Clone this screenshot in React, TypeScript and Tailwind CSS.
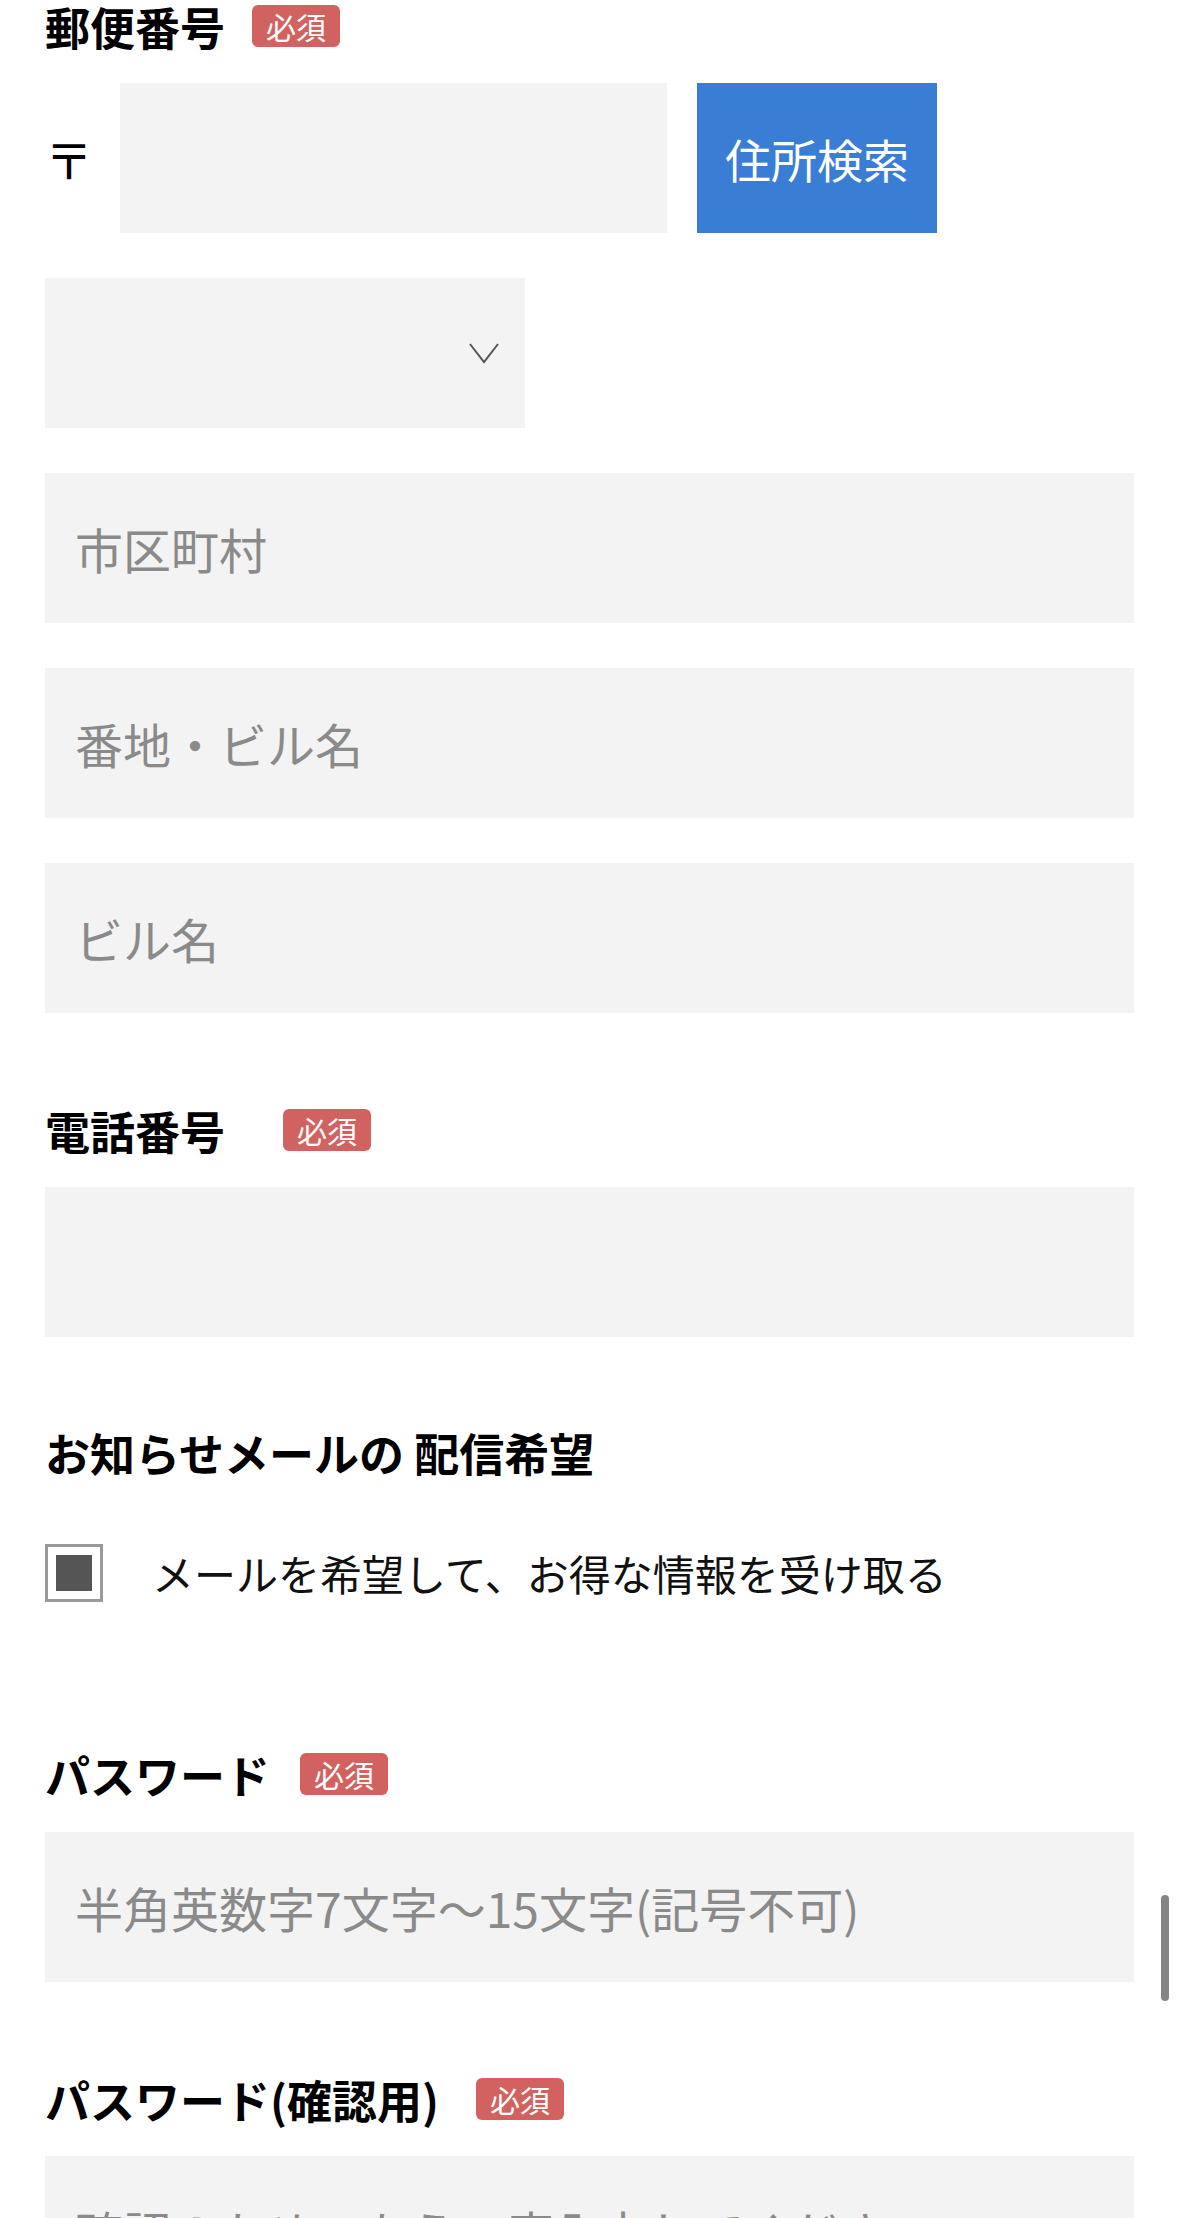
import React from "react";

function FieldLabel({ text, gap, required = true }: { text: string; gap?: string; required?: boolean }) {
  return (
    <div className="flex h-[52px] items-center">
      <span className="text-[45px] font-bold leading-none text-black">{text}</span>
      {required && (
        <span
          className={`${gap ?? "ml-[27px]"} flex h-[42px] w-[88px] items-center justify-center rounded-[6px] bg-[#d2625f] text-[30px] leading-none text-white`}
        >
          必須
        </span>
      )}
    </div>
  );
}

function TextField({ placeholder, className = "" }: { placeholder?: string; className?: string }) {
  return (
    <input
      type="text"
      placeholder={placeholder}
      className={`block h-[150px] w-full bg-[#f3f3f3] pl-[30px] text-[48px] leading-none text-[#222] outline-none placeholder:text-[#8a8a8a] ${className}`}
    />
  );
}

export default function App() {
  return (
    <div className="relative h-[2218px] overflow-hidden bg-white px-[45px] font-['Noto_Sans_CJK_JP',sans-serif] text-black">
      {/* 郵便番号 */}
      <FieldLabel text="郵便番号" gap="ml-[27px]" />
      <div className="mt-[31px] flex h-[150px] items-center">
        <span className="w-[75px] text-[48px] leading-none text-black">〒</span>
        <input type="text" className="h-full w-[547px] bg-[#f3f3f3] px-[30px] text-[48px] outline-none" />
        <button className="ml-[30px] h-full w-[240px] bg-[#3a7dd4] text-[46px] leading-none text-white">
          住所検索
        </button>
      </div>

      {/* 都道府県 */}
      <div className="mt-[45px] flex h-[150px] w-[480px] items-center justify-end bg-[#f3f3f3] pr-[26px]">
        <svg width="30" height="21" viewBox="0 0 30 21" fill="none">
          <polyline points="1,1 15,19 29,1" stroke="#555" strokeWidth="2" />
        </svg>
      </div>

      <div className="mt-[45px]">
        <TextField placeholder="市区町村" />
      </div>
      <div className="mt-[45px]">
        <TextField placeholder="番地・ビル名" />
      </div>
      <div className="mt-[45px]">
        <TextField placeholder="ビル名" />
      </div>

      {/* 電話番号 */}
      <div className="mt-[91px]">
        <FieldLabel text="電話番号" gap="ml-[58px]" />
      </div>
      <div className="mt-[31px]">
        <TextField />
      </div>

      {/* お知らせメール */}
      <div className="mt-[89px]">
        <FieldLabel text="お知らせメールの 配信希望" required={false} />
      </div>
      <label className="mt-[65px] flex h-[59px] items-center">
        <span className="flex h-[58px] w-[58px] items-center justify-center border-[3px] border-[#9a9a9a] bg-white">
          <span className="h-[36px] w-[36px] bg-[#555]" />
        </span>
        <span className="ml-[49px] text-[42px] leading-none text-[#111]">
          メールを希望して、お得な情報を受け取る
        </span>
      </label>

      {/* パスワード */}
      <div className="mt-[146px]">
        <FieldLabel text="パスワード" gap="ml-[30px]" />
      </div>
      <div className="mt-[32px]">
        <TextField placeholder="半角英数字7文字〜15文字(記号不可)" />
      </div>

      {/* パスワード(確認用) */}
      <div className="mt-[91px]">
        <FieldLabel text="パスワード(確認用)" gap="ml-[37px]" />
      </div>
      <div className="mt-[31px]">
        <TextField placeholder="確認のため、もう一度入力してください" />
      </div>

      {/* scroll indicator */}
      <div className="absolute left-[1161px] top-[1895px] h-[106px] w-[8px] rounded-full bg-[#858585]" />
    </div>
  );
}
